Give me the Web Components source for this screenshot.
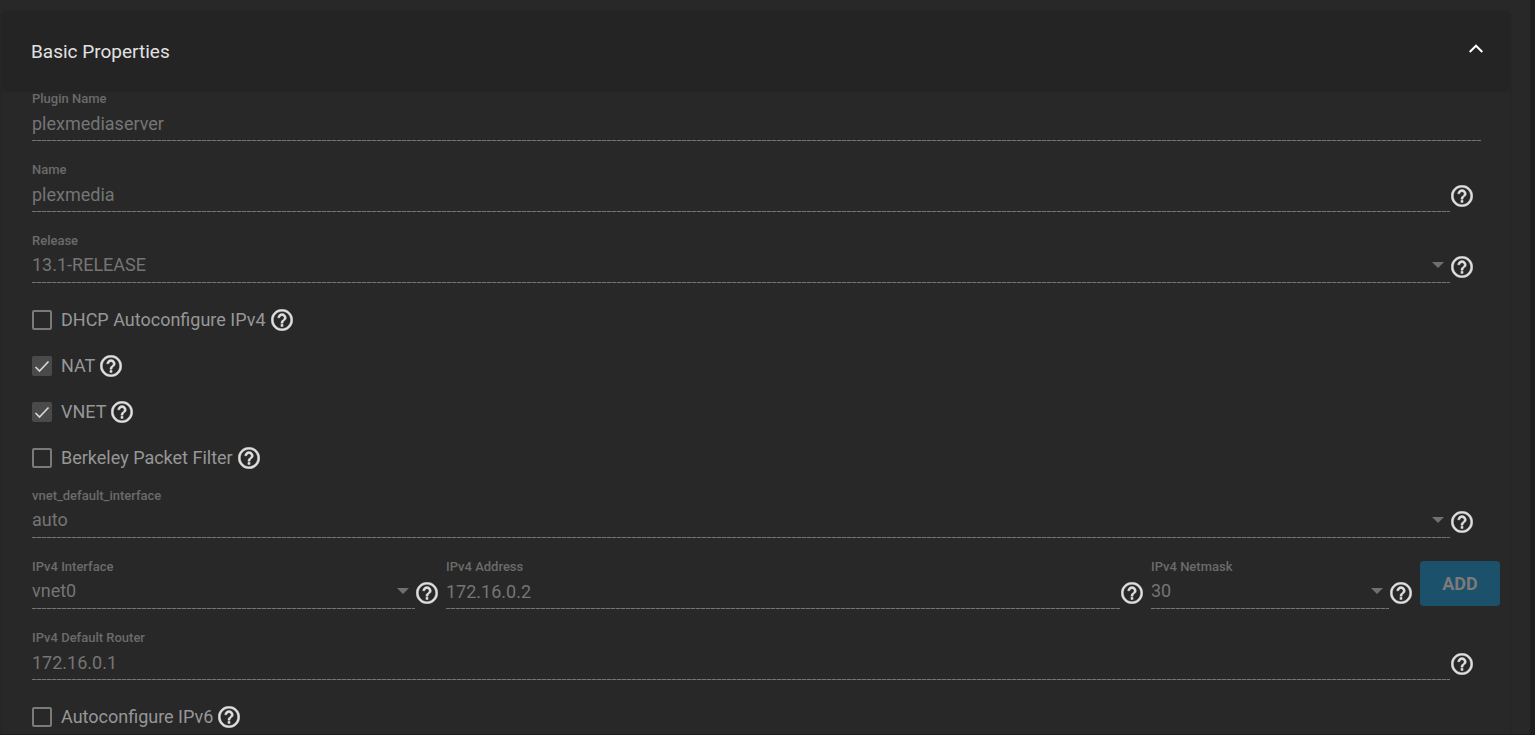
<!DOCTYPE html>
<html lang="en">
<head>
<meta charset="utf-8">
<title>Basic Properties</title>
<style>
  html { background: #282828; }
  body { margin: 0; font-family: Roboto, "Noto Sans", sans-serif; }
</style>
</head>
<body>
<jail-page>
  <jail-panel heading="Basic Properties">
    <field-stack>
      <text-field label="Plugin Name" value="plexmediaserver"></text-field>
      <text-field label="Name" value="plexmedia" help></text-field>
      <select-field label="Release" value="13.1-RELEASE" help></select-field>
    </field-stack>
    <check-list>
      <check-field label="DHCP Autoconfigure IPv4"></check-field>
      <check-field label="NAT" checked></check-field>
      <check-field label="VNET" checked></check-field>
      <check-field label="Berkeley Packet Filter"></check-field>
    </check-list>
    <field-stack>
      <select-field label="vnet_default_interface" value="auto" help></select-field>
      <address-row></address-row>
      <text-field label="IPv4 Default Router" value="172.16.0.1" help></text-field>
    </field-stack>
    <check-list>
      <check-field label="Autoconfigure IPv6"></check-field>
    </check-list>
  </jail-panel>
</jail-page>

<script>
class BaseElement extends HTMLElement {
  connectedCallback() {
    if (this.shadowRoot) return;
    this.attachShadow({ mode: 'open' }).innerHTML = this.render();
  }
  attr(name) { return this.getAttribute(name) || ''; }
}

customElements.define('jail-page', class extends BaseElement {
  render() {
    return `<style>
      :host { display: block; box-sizing: border-box; height: 100vh; overflow: hidden;
        padding: 12px 20px 0 2px; background: #282828;
        border-right: 5px solid #1e1e1e; border-bottom: 1px solid #211d1f; }
    </style><slot></slot>`;
  }
});

customElements.define('jail-panel', class extends BaseElement {
  render() {
    return `<style>
      :host { display: block; border-radius: 5px; box-shadow: 0 0 2px #1f1f1f; background: #282828; }
      header { display: flex; align-items: center; justify-content: space-between; box-sizing: border-box;
        height: 80px; padding: 0 27px 0 29px; background: #242424; border-radius: 5px; }
      h2 { margin: 0; font-size: 19px; line-height: 24px; font-weight: 400; color: #e2e2e2; }
      button { display: flex; padding: 0 0 8px; border: 0; background: none; color: #fff; }
      .body { padding: 0 29px 0 30px; }
    </style>
    <header><h2>${this.attr('heading')}</h2>
      <button type="button" aria-label="Collapse" aria-expanded="true">
        <svg width="14" height="9" viewBox="0 0 14 9" fill="none" stroke="currentColor" stroke-width="2"><path d="M.7 8 7 1.700 13.300 8"/></svg>
      </button></header>
    <div class="body"><slot></slot></div>`;
  }
});

customElements.define('field-stack', class extends BaseElement {
  render() {
    return `<style>:host { display: flex; flex-direction: column; gap: 22px; }</style><slot></slot>`;
  }
});

customElements.define('check-list', class extends BaseElement {
  render() {
    return `<style>:host { display: flex; flex-direction: column; gap: 22px; padding: 25px 0 19px; }</style><slot></slot>`;
  }
});

customElements.define('help-icon', class extends BaseElement {
  render() {
    return `<style>
      :host { display: block; flex: none; width: 22px; height: 22px; color: #dfdfdf; }
      svg { display: block; }
    </style>
    <svg width="22" height="22" viewBox="1.8 1.8 20.4 20.4" fill="currentColor" stroke="currentColor" stroke-width=".4" role="img" aria-label="Help"><path d="M11 18h2v-2h-2v2zm1-16C6.480 2 2 6.480 2 12s4.480 10 10 10 10-4.480 10-10S17.520 2 12 2zm0 18c-4.410 0-8-3.590-8-8s3.590-8 8-8 8 3.590 8 8-3.590 8-8 8zm0-14c-2.210 0-4 1.790-4 4h2c0-1.100.9-2 2-2s2 .9 2 2c0 2-3 1.750-3 5h2c0-2.250 3-2.500 3-5 0-2.210-1.790-4-4-4z"/></svg>`;
  }
});

const fieldStyle = `
  :host { display: flex; align-items: flex-end; min-width: 0; }
  .field { flex: 1; min-width: 0; position: relative; display: flex; flex-direction: column; }
  label { font-size: 13px; line-height: 14px; font-weight: 500; color: #6b6b6b; }
  input, select { appearance: none; display: block; box-sizing: border-box; width: 100%; height: 34px; margin: 0; padding: 0;
    border: 0; border-radius: 0; background: none; opacity: 1;
    font: 400 18px/24px Roboto, "Noto Sans", sans-serif; color: #757575; }
  .line { height: 1px; background: repeating-linear-gradient(90deg, #747474 0 4px, #484848 4px 5px); }
  .arrow { position: absolute; right: 6px; top: 28px; color: #707070; }
  .help { flex: none; box-sizing: border-box; width: 31px; padding: 0 0 5px 1px; }`;

customElements.define('text-field', class extends BaseElement {
  render() {
    return `<style>${fieldStyle}</style>
    <div class="field"><label for="c">${this.attr('label')}</label>
      <input id="c" type="text" value="${this.attr('value')}" disabled><div class="line"></div></div>
    ${this.hasAttribute('help') ? '<div class="help"><help-icon></help-icon></div>' : ''}`;
  }
});

customElements.define('select-field', class extends BaseElement {
  render() {
    return `<style>${fieldStyle}</style>
    <div class="field"><label for="c">${this.attr('label')}</label>
      <select id="c" disabled><option>${this.attr('value')}</option></select>
      <svg class="arrow" width="12" height="6" viewBox="0 0 12 6" fill="currentColor"><path d="M0 0h12L6 6z"/></svg>
      <div class="line"></div></div>
    ${this.hasAttribute('help') ? '<div class="help"><help-icon></help-icon></div>' : ''}`;
  }
});

customElements.define('check-field', class extends BaseElement {
  render() {
    return `<style>
      :host { display: flex; align-items: center; height: 24px; }
      .box { display: grid; flex: none; width: 20px; height: 20px; }
      .box > * { grid-area: 1 / 1; }
      input { appearance: none; box-sizing: border-box; width: 20px; height: 20px; margin: 0;
        border: 2px solid #7a7a7a; border-radius: 2px; }
      input:checked { border: 0; background: #4a4a4a; }
      svg { pointer-events: none; place-self: center; }
      label { padding: 0 5px 0 9px; font-size: 18px; line-height: 24px; color: #979797; }
    </style>
    <span class="box"><input id="c" type="checkbox" disabled ${this.hasAttribute('checked') ? 'checked' : ''}>
      ${this.hasAttribute('checked') ? '<svg width="16" height="14" viewBox="0 0 16 14" fill="none" stroke="#d6d6d6" stroke-width="1.700"><path d="M1.500 8 5.500 12 14.500 2.500"/></svg>' : ''}</span>
    <label for="c">${this.attr('label')}</label><help-icon></help-icon>`;
  }
});

customElements.define('address-row', class extends BaseElement {
  render() {
    return `<style>
      :host { display: flex; align-items: flex-start; margin-right: -19px; }
      .interface { flex: 414 1 0; }
      .address { flex: 705 1 0; }
      .netmask { flex: 269 1 0; }
      button { flex: none; width: 80px; height: 45px; margin: 1px 0 0; padding: 0; border: 0; border-radius: 4px;
        background: #1b516b; color: #7b7b7b; font: 700 18px/24px Roboto, "Noto Sans", sans-serif; }
    </style>
    <select-field class="interface" label="IPv4 Interface" value="vnet0" help></select-field>
    <text-field class="address" label="IPv4 Address" value="172.16.0.2" help></text-field>
    <select-field class="netmask" label="IPv4 Netmask" value="30" help></select-field>
    <button type="button" disabled>ADD</button>`;
  }
});
</script>
</body>
</html>
